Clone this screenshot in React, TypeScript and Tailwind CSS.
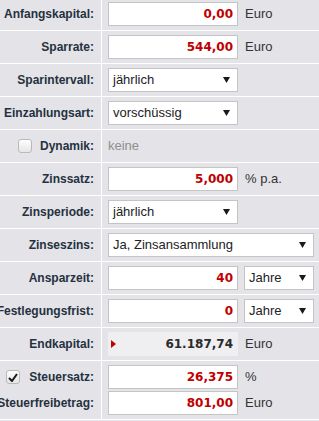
// Sparplan-Rechner: Eingabeformular
import type { ReactNode } from 'react';

const LABEL = "text-[12px] font-bold text-[#243140] [font-family:'Liberation_Sans',Arial,sans-serif]";
const NUM = "text-[12px] font-bold [font-family:'DejaVu_Sans',Verdana,sans-serif]";
const PLAIN = "text-[13px] [font-family:'Liberation_Sans',Arial,sans-serif]";

function Arrow() {
  return (
    <svg width="7" height="6" viewBox="0 0 7 6" className="shrink-0">
      <path d="M0 0 H7 L3.5 6 Z" fill="#1a1a1a" />
    </svg>
  );
}

function Field({ value, width = 'w-[130px]' }: { value: string; width?: string }) {
  return (
    <div className={`${width} h-[24px] bg-white border border-[#c4c4c4] flex items-center justify-end pr-[4px] text-[#c00000] ${NUM}`}>
      {value}
    </div>
  );
}

function Select({ value, width = 'w-[130px]' }: { value: string; width?: string }) {
  return (
    <div className={`${width} h-[24px] bg-white border border-[#c4c4c4] flex items-center justify-between pl-[4px] pr-[7px] text-[#222] ${PLAIN}`}>
      <span>{value}</span>
      <Arrow />
    </div>
  );
}

function Unit({ children }: { children: ReactNode }) {
  return <span className={`text-[#333] ${PLAIN}`}>{children}</span>;
}

function Checkbox({ checked }: { checked?: boolean }) {
  return (
    <span className="w-[14px] h-[14px] rounded-[3px] border border-[#b9b9b9] bg-gradient-to-b from-[#fdfdfd] to-[#e6e6e6] flex items-center justify-center shrink-0">
      {checked && (
        <svg width="10" height="9" viewBox="0 0 10 9">
          <path d="M1 5 L4 8 L9 1" stroke="#1a1a1a" strokeWidth="2" fill="none" />
        </svg>
      )}
    </span>
  );
}

function Row({ label, children }: { label: ReactNode; children: ReactNode }) {
  return (
    <div className="flex border-b border-white h-[33px]">
      <div className={`w-[102px] shrink-0 border-r border-white flex items-center justify-end pr-[7px] whitespace-nowrap ${LABEL}`}>
        {label}
      </div>
      <div className="flex-1 flex items-center gap-[7px] pl-[6px]">{children}</div>
    </div>
  );
}

export default function App() {
  return (
    <div className="w-[319px] h-[421px] overflow-hidden bg-[#e4e3e7]">
      <div className="flex flex-col -mt-[2px]">
        <Row label="Anfangskapital:">
          <Field value="0,00" />
          <Unit>Euro</Unit>
        </Row>
        <Row label="Sparrate:">
          <Field value="544,00" />
          <Unit>Euro</Unit>
        </Row>
        <Row label="Sparintervall:">
          <Select value="jährlich" />
        </Row>
        <Row label="Einzahlungsart:">
          <Select value="vorschüssig" />
        </Row>
        <Row
          label={
            <span className="flex items-center gap-[8px]">
              <Checkbox />
              Dynamik:
            </span>
          }
        >
          <span className={`text-[#8e8e8e] ${PLAIN}`}>keine</span>
        </Row>
        <Row label="Zinssatz:">
          <Field value="5,000" />
          <Unit>% p.a.</Unit>
        </Row>
        <Row label="Zinsperiode:">
          <Select value="jährlich" />
        </Row>
        <Row label="Zinseszins:">
          <Select value="Ja, Zinsansammlung" width="w-[206px]" />
        </Row>
        <Row label="Ansparzeit:">
          <div className="flex items-center gap-[6px]">
            <Field value="40" />
            <Select value="Jahre" width="w-[70px]" />
          </div>
        </Row>
        <Row label="Festlegungsfrist:">
          <div className="flex items-center gap-[6px]">
            <Field value="0" />
            <Select value="Jahre" width="w-[70px]" />
          </div>
        </Row>
        <Row label="Endkapital:">
          <div className={`w-[130px] h-[24px] bg-[#efeef1] flex items-center justify-between pl-[3px] pr-[5px] text-[#2b2b2b] ${NUM}`}>
            <svg width="5" height="8" viewBox="0 0 5 8">
              <path d="M0 0 L5 4 L0 8 Z" fill="#c00000" />
            </svg>
            <span>61.187,74</span>
          </div>
          <Unit>Euro</Unit>
        </Row>
        <div className="flex border-b border-white h-[59px]">
          <div className={`w-[102px] shrink-0 border-r border-white flex flex-col justify-center gap-[2px] pr-[7px] whitespace-nowrap ${LABEL}`}>
            <div className="h-[24px] flex items-center justify-end gap-[9px]">
              <Checkbox checked />
              Steuersatz:
            </div>
            <div className="h-[24px] flex items-center justify-end">Steuerfreibetrag:</div>
          </div>
          <div className="flex-1 flex flex-col justify-center gap-[2px] pl-[6px]">
            <div className="flex items-center gap-[7px]">
              <Field value="26,375" />
              <Unit>%</Unit>
            </div>
            <div className="flex items-center gap-[7px]">
              <Field value="801,00" />
              <Unit>Euro</Unit>
            </div>
          </div>
        </div>
      </div>
    </div>
  );
}
